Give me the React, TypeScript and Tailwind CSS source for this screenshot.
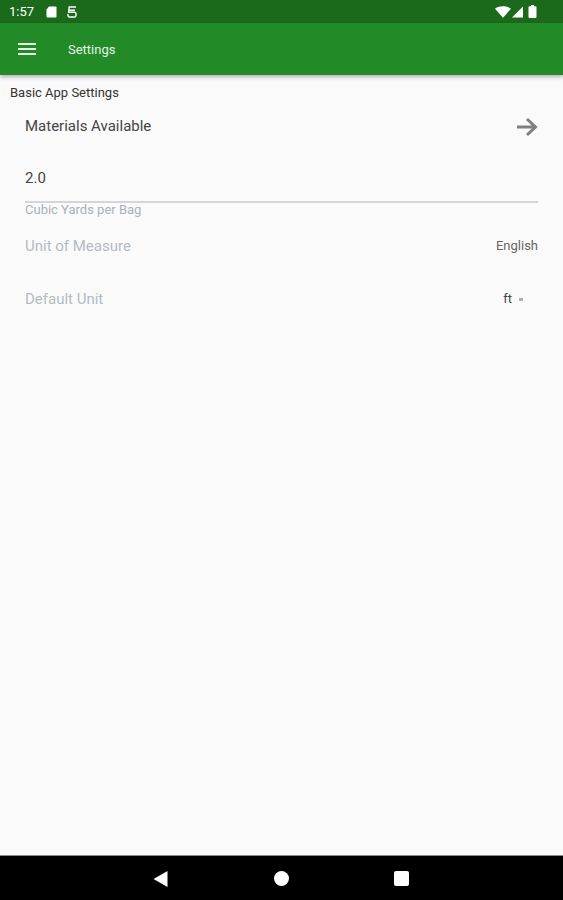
import React from "react";

const font = { fontFamily: "Roboto, sans-serif" };

function StatusBar() {
  return (
    <div className="h-[23px] bg-[#1b6a1c] flex items-center justify-between pl-[9px] pr-[26px] text-white">
      <div className="flex items-center">
        <span className="text-[13px] leading-none w-[26px]">1:57</span>
        <svg width="11" height="12" viewBox="0 0 11 12" className="ml-[11px]">
          <path d="M3 0.5H9.5a1 1 0 0 1 1 1V10.5a1 1 0 0 1-1 1H1.5a1 1 0 0 1-1-1V3.5Z" fill="#fff" />
        </svg>
        <svg width="10" height="12" viewBox="0 0 10 12" className="ml-[10px]" fill="none" stroke="#fff" strokeWidth="1.4">
          <path d="M9 1H2.2L1.6 6.2H7.8a1.4 1.4 0 0 1 1.2 1.4V9.6A1.4 1.4 0 0 1 7.6 11H2.4A1.4 1.4 0 0 1 1 9.6V8M1.8 4.2H8" />
        </svg>
      </div>
      <div className="flex items-center">
        <svg width="16" height="12" viewBox="0 0 17 12">
          <path d="M0 2.5C2.2 0.9 5 0 8.5 0S14.8 0.9 17 2.5L8.5 12Z" fill="#fff" />
        </svg>
        <svg width="11" height="12" viewBox="0 0 12 12" className="ml-[1px] mr-[5px]">
          <path d="M12 0V12H0Z" fill="#fff" />
        </svg>
        <svg width="9" height="13" viewBox="0 0 8 13">
          <path d="M2.5 0H5.5V1.2H7a1 1 0 0 1 1 1V12a1 1 0 0 1-1 1H1a1 1 0 0 1-1-1V2.2a1 1 0 0 1 1-1H2.5Z" fill="#fff" />
        </svg>
      </div>
    </div>
  );
}

function AppBar() {
  return (
    <div className="h-[52px] bg-[#228b27] flex items-center shadow-[0_2px_4px_rgba(0,0,0,0.3)] relative">
      <div className="ml-[18px] w-[18px] flex flex-col gap-[3px]">
        <div className="h-[2px] bg-[#e8f3e8]" />
        <div className="h-[2px] bg-[#e8f3e8]" />
        <div className="h-[2px] bg-[#e8f3e8]" />
      </div>
      <span className="ml-[32px] pt-[1px] text-[13px] text-[#e6f2e6]">Settings</span>
    </div>
  );
}

function NavBar() {
  return (
    <div className="h-[45px] bg-black border-t border-[#8a8a8a] flex items-center pl-[153px] pt-[1px]">
      <svg width="15" height="16" viewBox="0 0 14 16">
        <path d="M14 0V16L0 8Z" fill="#fff" />
      </svg>
      <div className="ml-[106px] w-[15px] h-[15px] rounded-full bg-white" />
      <div className="ml-[105px] w-[15px] h-[15px] rounded-[2px] bg-white" />
    </div>
  );
}

export default function App() {
  return (
    <div className="w-[563px] h-[900px] flex flex-col bg-[#fafafa]" style={font}>
      <StatusBar />
      <AppBar />
      <div className="flex-1 flex flex-col">
        <div className="pl-[10px] pt-[10px] text-[13px] leading-[15px] text-[#333]">Basic App Settings</div>
        <div className="pl-[25px] pr-[25px] flex flex-col">
          <div className="mt-[8px] h-[37px] flex items-center justify-between">
            <span className="text-[15px] text-[#444]">Materials Available</span>
            <svg width="22" height="20" viewBox="0 0 22 20" fill="none" stroke="#808080" strokeWidth="3">
              <path d="M1 10H20M11 2L19.5 10L11 18" />
            </svg>
          </div>
          <div className="mt-[21px] h-[24px] flex items-center text-[15px] text-[#444]">2.0</div>
          <div className="mt-[11px] h-[2px] bg-[#d4d6d8]" />
          <div className="text-[13px] leading-[13px] text-[#aab1ba]">Cubic Yards per Bag</div>
          <div className="mt-[20px] h-[20px] flex items-center justify-between">
            <span className="text-[15px] text-[#b4bbc3]">Unit of Measure</span>
            <span className="text-[13px] text-[#666]">English</span>
          </div>
          <div className="mt-[33px] h-[20px] flex items-center justify-between">
            <span className="text-[15px] text-[#b4bbc3]">Default Unit</span>
            <div className="flex items-center mr-[15px]">
              <span className="text-[13px] text-[#444]">ft</span>
              <div className="ml-[7px] w-[4px] h-[3px] bg-[#b0b0b0]" />
            </div>
          </div>
        </div>
      </div>
      <NavBar />
    </div>
  );
}
